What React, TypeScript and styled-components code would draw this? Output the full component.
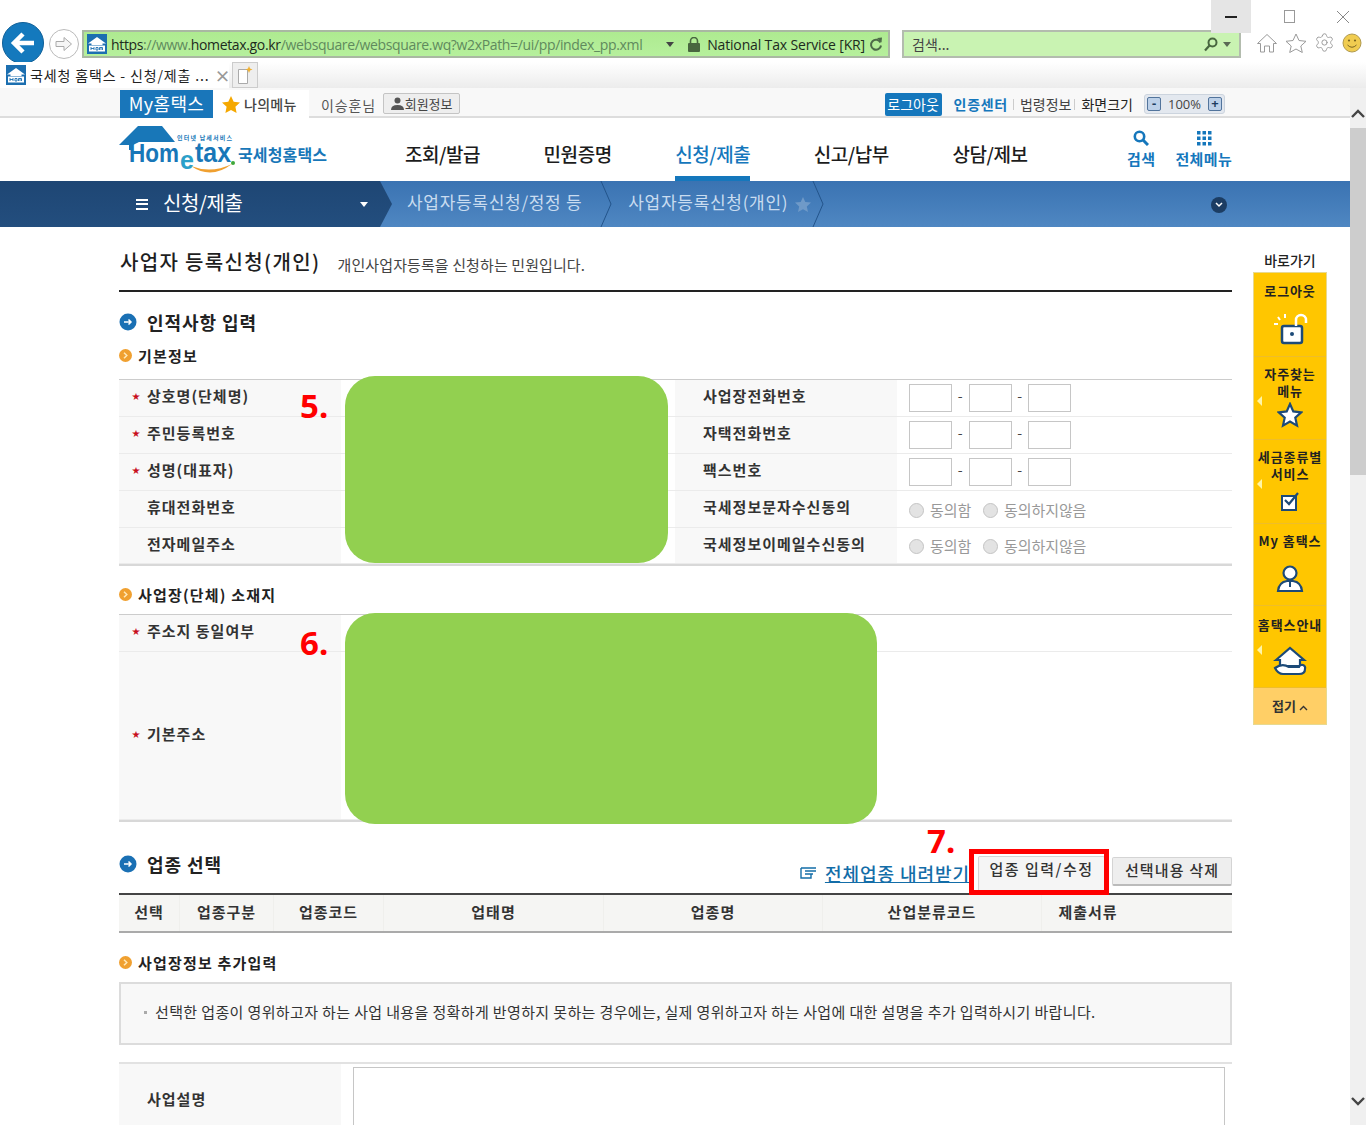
import React from 'react';
import styled, { createGlobalStyle } from 'styled-components';
import { Settings } from 'lucide-react';

const GlobalStyle = createGlobalStyle`
  html, body {
    margin: 0;
    padding: 0;
    background: #fff;
    font-family: "Noto Sans CJK KR", "Noto Sans", sans-serif;
    color: #222;
  }
  * { box-sizing: border-box; }
`;

const Screen = styled.div`
  position: relative;
  width: 1366px;
  height: 1125px;
  overflow: hidden;
  background: #fff;
`;

/* ---------- browser chrome ---------- */
const Chrome = styled.div`
  position: relative;
  height: 88px;
  background: #fff;
`;

const WindowControls = styled.div`
  position: absolute;
  top: 0;
  right: 9px;
  display: flex;
`;

const WindowButton = styled.div<{ $active?: boolean; $width: number }>`
  width: ${p => p.$width}px;
  height: 33px;
  display: flex;
  align-items: center;
  justify-content: center;
  background: ${p => (p.$active ? '#e5e5e5' : 'transparent')};
`;

const ToolRow = styled.div`
  display: flex;
  align-items: flex-start;
  padding: 22px 0 0 2px;
  height: 62px;
`;

const BackButton = styled.div`
  width: 42px;
  height: 42px;
  border-radius: 50%;
  background: #1479bd;
  border: 1px solid #0e5f98;
  display: flex;
  align-items: center;
  justify-content: center;
`;

const ForwardButton = styled.div`
  width: 30px;
  height: 30px;
  margin: 7px 3px 0 5px;
  border-radius: 50%;
  border: 1px solid #bbb;
  background: #fff;
  display: flex;
  align-items: center;
  justify-content: center;
`;

const AddressBar = styled.div`
  width: 808px;
  height: 28px;
  margin-top: 8px;
  padding: 0 5px 0 3px;
  background: linear-gradient(#aeea90, #b6f09c);
  border: 2px solid #a9b8a2;
  display: flex;
  align-items: center;
  font-family: "Open Sans", sans-serif;
  font-size: 14px;
  letter-spacing: -0.35px;
  white-space: nowrap;
`;

const UrlDark = styled.span`
  color: #1d2b1d;
`;

const UrlDim = styled.span`
  color: #5f8a5d;
`;

const UrlText = styled.div`
  width: 567px;
  margin-left: 4px;
`;

const Caret = styled.span<{ $color?: string }>`
  display: inline-block;
  width: 0;
  height: 0;
  border-left: 4px solid transparent;
  border-right: 4px solid transparent;
  border-top: 5px solid ${p => p.$color ?? '#444'};
`;

const CertName = styled.span`
  margin-left: 6px;
  color: #1d2b1d;
  letter-spacing: -0.15px;
`;

const BarIcon = styled.svg<{ $left: number }>`
  flex: none;
  margin-left: ${p => p.$left}px;
`;

const FaviconBox = styled.svg`
  flex: none;
`;

const SearchBar = styled.div`
  width: 339px;
  height: 28px;
  margin: 8px 0 0 12px;
  padding: 0 8px;
  background: #c9f3b2;
  border: 2px solid #b3bcae;
  display: flex;
  align-items: center;
  justify-content: space-between;
  font-size: 14px;
  color: #444;
`;

const SearchEnd = styled.div`
  display: flex;
  align-items: center;
  gap: 5px;
`;

const BrowserIcons = styled.div`
  display: flex;
  align-items: center;
  gap: 7px;
  margin: 10px 0 0 15px;
`;

const TabRow = styled.div`
  height: 26px;
  display: flex;
  align-items: stretch;
  background: linear-gradient(#fff, #ececec);
`;

const Tab = styled.div`
  width: 229px;
  padding-left: 6px;
  background: #fff;
  display: flex;
  align-items: center;
  gap: 4px;
  font-size: 14px;
  letter-spacing: 0.85px;
  color: #222;
  white-space: nowrap;
`;

const TabClose = styled.span`
  margin-left: 1px;
  color: #999;
  font-size: 16px;
  font-weight: 700;
`;

const NewTab = styled.div`
  width: 26px;
  margin-left: 3px;
  background: #eee;
  border: 1px solid #ccc;
  display: flex;
  align-items: center;
  justify-content: center;
`;

/* ---------- page frame ---------- */
const Viewport = styled.div`
  display: flex;
  height: 1037px;
`;

const Page = styled.div`
  width: 1350px;
  flex: none;
`;

const Scrollbar = styled.div`
  width: 16px;
  flex: none;
  padding-top: 21px;
  background: #f0f0f0;
  display: flex;
  flex-direction: column;
  align-items: center;
`;

const ScrollThumb = styled.div`
  width: 16px;
  height: 347px;
  margin-top: 10px;
  background: #cdcdcd;
`;

const ScrollDown = styled.div`
  margin-top: auto;
  margin-bottom: 14px;
`;

/* ---------- utility bar ---------- */
const UtilBar = styled.div`
  height: 30px;
  padding: 0 125px 0 120px;
  background: #f8f8f8;
  border-bottom: 2px solid #ddd;
  display: flex;
  align-items: flex-start;
`;

const MyTab = styled.div`
  width: 93px;
  height: 28px;
  margin-top: 2px;
  background: #1976ba;
  color: #fff;
  font-size: 18px;
  line-height: 26px;
  letter-spacing: 0.4px;
  text-align: center;
  white-space: nowrap;
`;

const MyMenu = styled.div`
  width: 96px;
  height: 28px;
  margin-top: 2px;
  padding-left: 9px;
  background: #fff;
  display: flex;
  align-items: center;
  gap: 4px;
  font-size: 14px;
  font-weight: 500;
  letter-spacing: 0.3px;
  color: #444;
`;

const UserName = styled.span`
  margin: 6px 0 0 12px;
  font-size: 14px;
  line-height: 22px;
  color: #555;
  letter-spacing: 0.9px;
`;

const MemberButton = styled.div`
  width: 77px;
  height: 21px;
  margin: 5px 0 0 7px;
  background: #eee;
  border: 1px solid #c4c4c4;
  border-radius: 2px;
  display: flex;
  align-items: center;
  justify-content: center;
  gap: 1px;
  font-size: 13px;
  color: #444;
`;

const UtilRight = styled.div`
  margin-left: auto;
  display: flex;
  align-items: center;
  height: 28px;
  margin-top: 2px;
  font-size: 14px;
  white-space: nowrap;
`;

const LogoutButton = styled.div`
  width: 57px;
  height: 23px;
  background: #1577bc;
  border-radius: 2px;
  color: #fff;
  text-align: center;
  line-height: 22px;
  font-size: 14px;
`;

const CertLink = styled.span`
  margin-left: 12px;
  color: #1577bc;
  font-weight: 700;
  letter-spacing: 0.7px;
`;

const UtilLink = styled.span<{ $dark?: boolean }>`
  margin-left: ${p => (p.$dark ? 3 : 5)}px;
  padding-left: 6px;
  border-left: 1px solid #ccc;
  line-height: 11px;
  color: ${p => (p.$dark ? '#222' : '#444')};
`;

const ZoomBox = styled.div`
  width: 81px;
  height: 20px;
  margin-left: 11px;
  padding: 0 2px;
  background: #e3e8ef;
  border: 1px solid #ccd4de;
  border-radius: 3px;
  display: flex;
  align-items: center;
  justify-content: space-between;
  font-family: "Open Sans", sans-serif;
  font-size: 13px;
  color: #444;
`;

const ZoomStep = styled.div`
  width: 14px;
  height: 14px;
  background: #bcd0e8;
  border: 1px solid #52749c;
  border-radius: 2px;
  line-height: 11px;
  text-align: center;
  color: #1d3c60;
  font-weight: 700;
`;

/* ---------- main navigation ---------- */
const NavBar = styled.div`
  height: 63px;
  padding-left: 119px;
  display: flex;
  align-items: flex-start;
`;

const LogoWrap = styled.div`
  width: 286px;
  height: 63px;
  flex: none;
`;

const NavItem = styled.div<{ $active?: boolean }>`
  height: 63px;
  margin-right: 63.5px;
  padding-top: 21px;
  font-size: 19px;
  line-height: 30px;
  font-weight: 500;
  letter-spacing: -0.45px;
  white-space: nowrap;
  color: ${p => (p.$active ? '#1577bc' : '#1c1c1c')};
  border-bottom: 5px solid ${p => (p.$active ? '#1577bc' : 'transparent')};
`;

const NavTools = styled.div`
  margin-left: 36px;
  display: flex;
  gap: 20px;
  padding-top: 12px;
`;

const NavTool = styled.div`
  display: flex;
  flex-direction: column;
  align-items: center;
  gap: 2px;
  color: #1577bc;
  font-size: 15px;
  line-height: 22px;
  font-weight: 700;
  letter-spacing: 0.4px;
  white-space: nowrap;
`;

/* ---------- breadcrumb bar ---------- */
const CrumbBar = styled.div`
  height: 46px;
  background: linear-gradient(#3a73b2, #4f87c2);
  display: flex;
  align-items: center;
  color: #c9dcf0;
`;

const CrumbHome = styled.div`
  width: 392px;
  height: 46px;
  flex: none;
  padding-left: 136px;
  background: linear-gradient(#1e4674, #234e7e);
  clip-path: polygon(0 0, 380px 0, 392px 50%, 380px 100%, 0 100%);
  display: flex;
  align-items: center;
  color: #fff;
  font-size: 20px;
  letter-spacing: -0.4px;
`;

const Burger = styled.span`
  width: 12px;
  height: 11px;
  margin-right: 15px;
  border-top: 2px solid #fff;
  border-bottom: 2px solid #fff;
  position: relative;
  &::after {
    content: '';
    position: absolute;
    left: 0;
    right: 0;
    top: 2.5px;
    height: 2px;
    background: #fff;
  }
`;

const CrumbHomeLabel = styled.span`
  width: 197px;
  padding-bottom: 4px;
`;

const Crumb = styled.div<{ $left: number }>`
  margin-left: ${p => p.$left}px;
  padding-bottom: 5px;
  font-size: 17px;
  letter-spacing: 0.7px;
  white-space: nowrap;
`;

const CrumbFold = styled.svg<{ $left: number }>`
  display: block;
  flex: none;
  margin: 0 4px 0 ${p => p.$left}px;
`;

const CrumbToggle = styled.div`
  width: 16px;
  height: 16px;
  margin: 1px 123px 0 auto;
  border-radius: 50%;
  background: #1c3d63;
  display: flex;
  align-items: center;
  justify-content: center;
`;

/* ---------- content ---------- */
const Body = styled.div`
  display: flex;
  padding-left: 119px;
`;

const Content = styled.main`
  width: 1113px;
  flex: none;
`;

const TitleRow = styled.div`
  height: 65px;
  padding-top: 21px;
  border-bottom: 2px solid #222;
  display: flex;
  align-items: flex-start;
  white-space: nowrap;
`;

const PageTitle = styled.h1`
  margin: 0 0 0 1px;
  font-size: 20px;
  line-height: 28px;
  font-weight: 500;
  letter-spacing: 1.35px;
  color: #1e1e1e;
`;

const PageDesc = styled.span`
  margin: 3px 0 0 17px;
  font-size: 15px;
  line-height: 28px;
  letter-spacing: 0.1px;
  color: #444;
`;

const SectionHead = styled.div`
  margin-top: 18px;
  display: flex;
  align-items: center;
  gap: 10px;
  height: 24px;
  font-size: 18px;
  font-weight: 700;
  letter-spacing: 0.95px;
  color: #222;
`;

const SubHead = styled.div<{ $top: number }>`
  margin-top: ${p => p.$top}px;
  height: 20px;
  padding-bottom: 2px;
  display: flex;
  align-items: center;
  gap: 6px;
  font-size: 15px;
  font-weight: 700;
  color: #222;
  letter-spacing: 1.2px;
  white-space: nowrap;
`;

const FormTable = styled.div<{ $top: number }>`
  position: relative;
  margin-top: ${p => p.$top}px;
  border-top: 1px solid #ccc;
  border-bottom: 2px solid #d8d8d8;
`;

const FormRow = styled.div<{ $height?: number }>`
  display: flex;
  height: ${p => p.$height ?? 37}px;
  border-bottom: 1px solid #ebebeb;
  &:last-of-type {
    border-bottom: 0;
  }
`;

const LabelCell = styled.div`
  width: 222px;
  flex: none;
  padding: 0 0 5px 13px;
  background: #f8f8f8;
  display: flex;
  align-items: center;
  font-size: 15px;
  font-weight: 700;
  letter-spacing: 1px;
  color: #333;
  white-space: nowrap;
`;

const Required = styled.span`
  width: 15px;
  flex: none;
  color: #c8101c;
  font-size: 8px;
  letter-spacing: 0;
`;

const ValueCell = styled.div<{ $wide?: boolean }>`
  width: 334px;
  flex: ${p => (p.$wide ? 1 : 'none')};
`;

const SideLabelCell = styled(LabelCell)`
  padding-left: 28px;
`;

const InputCell = styled.div`
  flex: 1;
  padding-left: 12px;
  display: flex;
  align-items: center;
`;

const PhoneInput = styled.input`
  width: 43px;
  height: 28px;
  padding: 0;
  background: #fff;
  border: 1px solid #c6c6c6;
`;

const Dash = styled.span`
  width: 16.5px;
  text-align: center;
  font-size: 14px;
  line-height: 20px;
  margin-top: -7px;
  color: #444;
`;

const Radio = styled.span`
  width: 15px;
  height: 15px;
  margin: 2px 6px 0 0;
  border-radius: 50%;
  background: #e3e3e3;
  border: 1px solid #c4c4c4;
`;

const RadioLabel = styled.span`
  margin-right: 12px;
  font-size: 15px;
  color: #999;
  letter-spacing: -0.1px;
  white-space: nowrap;
`;

/* annotations painted over the captured form */
const Blob = styled.div<{ $top: number; $width: number; $height: number }>`
  position: absolute;
  top: ${p => p.$top}px;
  left: 226px;
  width: ${p => p.$width}px;
  height: ${p => p.$height}px;
  background: #92d050;
  border-radius: 30px;
`;

const StepMark = styled.span<{ $top: number; $left: number }>`
  position: absolute;
  top: ${p => p.$top}px;
  left: ${p => p.$left}px;
  font-family: "Noto Sans", "Open Sans", sans-serif;
  font-size: 33px;
  line-height: 40px;
  font-weight: 700;
  color: #f00;
`;

const Highlight = styled.div`
  position: absolute;
  top: 27px;
  left: 850px;
  width: 140px;
  height: 46px;
  border: 5px solid #f00;
`;

const ToolbarRow = styled.div`
  position: relative;
  height: 71px;
  padding-top: 31px;
  display: flex;
  align-items: flex-start;
`;

const ToolbarHead = styled(SectionHead)`
  margin-top: -1px;
`;

const ToolbarActions = styled.div`
  margin: 3px 0 0 auto;
  display: flex;
  align-items: flex-start;
`;

const DownloadLink = styled.a`
  margin: 5px 8px 0 0;
  display: flex;
  align-items: center;
  gap: 8px;
  font-size: 18px;
  line-height: 24px;
  font-weight: 500;
  letter-spacing: 0.95px;
  color: #136da8;
  text-decoration: underline;
  white-space: nowrap;
`;

const DownloadIcon = styled.svg`
  flex: none;
`;

const ActionButton = styled.div<{ $plain?: boolean }>`
  height: ${p => (p.$plain ? 29 : 36)}px;
  width: ${p => (p.$plain ? 120 : 127)}px;
  margin-left: ${p => (p.$plain ? 7 : 0)}px;
  margin-top: ${p => (p.$plain ? 1 : 0)}px;
  background: ${p => (p.$plain ? '#eee' : '#f5f5f5')};
  border: 1px solid #d4d4d4;
  border-bottom: 2px solid #bbb;
  border-radius: 2px;
  text-align: center;
  font-size: 15px;
  line-height: 24px;
  font-weight: 500;
  letter-spacing: ${p => (p.$plain ? 1.15 : 1.5)}px;
  color: #333;
  white-space: nowrap;
`;

const GridHead = styled.div`
  height: 40px;
  display: flex;
  border-top: 2px solid #444;
  border-bottom: 2px solid #aaa;
  background: #f5f5f3;
`;

const GridCol = styled.div<{ $width: number }>`
  width: ${p => p.$width}px;
  flex: none;
  border-right: 1px solid #efefec;
  text-align: center;
  font-size: 15px;
  line-height: 33px;
  font-weight: 700;
  letter-spacing: 1px;
  color: #333;
  &:nth-last-child(-n + 2) {
    border-right: 0;
  }
`;

const Notice = styled.div`
  height: 63px;
  margin-top: 9px;
  padding: 0 0 5px 23px;
  background: #f8f8f8;
  border: 2px solid #dcdcdc;
  display: flex;
  align-items: center;
  gap: 8px;
  font-size: 15px;
  letter-spacing: 0.37px;
  color: #333;
  white-space: nowrap;
`;

const NoticeDot = styled.span`
  width: 3px;
  height: 3px;
  margin-top: 3px;
  flex: none;
  background: #aaa;
`;

const DescRow = styled.div`
  display: flex;
  height: 130px;
  margin-top: 17px;
  border-top: 2px solid #e2e2e2;
`;

const DescLabel = styled(LabelCell)`
  padding: 23px 0 0 28px;
  align-items: flex-start;
  line-height: 24px;
`;

const DescBox = styled.div`
  flex: 1;
  margin: 3px 7px 0 12px;
  border: 1px solid #c6c6c6;
  background: #fff;
`;

/* ---------- quick menu ---------- */
const QuickRail = styled.aside`
  width: 74px;
  margin: 23px 0 0 21px;
  flex: none;
`;

const QuickTitle = styled.div`
  height: 22px;
  text-align: center;
  font-size: 14px;
  line-height: 20px;
  font-weight: 500;
  color: #222;
`;

const QuickList = styled.div`
  border: 1px solid #e8d98f;
`;

const QuickItem = styled.div<{ $height: number; $top: number }>`
  position: relative;
  height: ${p => p.$height}px;
  padding-top: ${p => p.$top}px;
  background: #ffc600;
  border-bottom: 1px solid #eebd2a;
  display: flex;
  flex-direction: column;
  align-items: center;
  text-align: center;
  font-size: 13px;
  line-height: 17px;
  font-weight: 700;
  color: #222;
  letter-spacing: 0.9px;
  white-space: nowrap;
`;

const QuickIcon = styled.svg`
  margin-top: auto;
  margin-bottom: 11px;
`;

const NestedMark = styled.span`
  position: absolute;
  left: 3px;
  top: 39px;
  border-top: 5px solid transparent;
  border-bottom: 5px solid transparent;
  border-right: 5px solid #fff5a8;
`;

const QuickFold = styled.div`
  height: 36px;
  background: #ffcf66;
  text-align: center;
  font-size: 13px;
  line-height: 35px;
  font-weight: 700;
  color: #333;
`;

/* ---------- drawings ---------- */
const HouseFavicon = () => (
  <FaviconBox width="20" height="20" viewBox="0 0 20 20">
    <rect width="20" height="20" fill="#1c6fb0" />
    <path d="M1 9.500 10 3l9 6.500h-3.500V11h-11V9.500z" fill="#fff" />
    <rect x="2" y="11.500" width="16" height="6" fill="#fff" />
    <path d="M4 13v3M7 13v3M4 14.500h3M9 13.500h2v2.500H9zM12.500 16v-2.500h3V16M14 13.500V16" stroke="#1c6fb0" strokeWidth=".9" fill="none" />
  </FaviconBox>
);

const BlueBullet = () => (
  <svg width="18" height="18" viewBox="0 0 18 18">
    <circle cx="9" cy="9" r="8.500" fill="#1a70b4" />
    <path d="M5 9h7M9.500 6.500 12 9l-2.500 2.500" stroke="#fff" strokeWidth="1.500" fill="none" />
  </svg>
);

const OrangeBullet = () => (
  <svg width="13" height="13" viewBox="0 0 13 13">
    <circle cx="6.500" cy="6.500" r="6.500" fill="#f0a030" />
    <path d="M5 3.800 7.800 6.500 5 9.200" stroke="#ffe9b8" strokeWidth="1.500" fill="none" />
  </svg>
);

const Logo = () => (
  <LogoWrap>
    <svg width="210" height="60" viewBox="0 0 210 60">
      <path d="M0 27 19 8h24l13 16H20l-6 3v5h-4v-5z" fill="#1877b8" />
      <text x="10" y="44" fontFamily="Liberation Sans, sans-serif" fontSize="25" fontWeight="700" fill="#1877b8" textLength="50" lengthAdjust="spacingAndGlyphs">Hom</text>
      <text x="61" y="51" fontFamily="Liberation Sans, sans-serif" fontSize="25" fontWeight="700" fill="#2ba0c9">e</text>
      <text x="76" y="44" fontFamily="Liberation Sans, sans-serif" fontSize="27" fontWeight="700" fill="#1877b8" textLength="36" lengthAdjust="spacingAndGlyphs">tax</text>
      <circle cx="114" cy="45" r="2" fill="#3fa83a" />
      <path d="M72 48Q92 62 113 46 92 56 72 48" fill="#f0a030" />
      <text x="58" y="22" fontFamily="Noto Sans CJK KR, sans-serif" fontSize="6" fontWeight="700" fill="#1877b8" textLength="55">인터넷 납세서비스</text>
      <text x="119" y="43" fontFamily="Noto Sans CJK KR, sans-serif" fontSize="16" fontWeight="700" fill="#1877b8" textLength="89">국세청홈택스</text>
    </svg>
  </LogoWrap>
);

const Chevron = ({ up }: { up?: boolean }) => (
  <svg width="14" height="9" viewBox="0 0 14 9">
    <path d={up ? 'M1 8 7 2l6 6' : 'M1 1l6 6 6-6'} stroke="#444" strokeWidth="2.400" fill="none" />
  </svg>
);

const Fold = ({ left }: { left: number }) => (
  <CrumbFold $left={left} width="12" height="46" viewBox="0 0 12 46">
    <path d="M1 0 11 23 1 46" stroke="#23548a" fill="none" />
  </CrumbFold>
);

const PhoneFields = () => (
  <InputCell>
    <PhoneInput />
    <Dash>-</Dash>
    <PhoneInput />
    <Dash>-</Dash>
    <PhoneInput />
  </InputCell>
);

const AgreeFields = () => (
  <InputCell>
    <Radio />
    <RadioLabel>동의함</RadioLabel>
    <Radio />
    <RadioLabel>동의하지않음</RadioLabel>
  </InputCell>
);

const gridCols: [string, number][] = [
  ['선택', 61],
  ['업종구분', 94],
  ['업종코드', 110],
  ['업태명', 220],
  ['업종명', 219],
  ['산업분류코드', 219],
  ['제출서류', 92],
  ['', 98],
];

export default function App() {
  return (
    <Screen>
      <GlobalStyle />
      <Chrome>
        <WindowControls>
          <WindowButton $active $width={40}>
            <svg width="12" height="2"><rect width="12" height="2" fill="#222" /></svg>
          </WindowButton>
          <WindowButton $width={78}>
            <svg width="12" height="13"><rect x=".5" y=".5" width="10" height="12" fill="none" stroke="#999" /></svg>
          </WindowButton>
          <WindowButton $width={28}>
            <svg width="14" height="14"><path d="M1 1l12 12M13 1 1 13" stroke="#888" fill="none" /></svg>
          </WindowButton>
        </WindowControls>
        <ToolRow>
          <BackButton>
            <svg width="26" height="24" viewBox="0 0 26 24">
              <path d="M24 12H5M13 3l-9 9 9 9" stroke="#fff" strokeWidth="4.500" fill="none" />
            </svg>
          </BackButton>
          <ForwardButton>
            <svg width="18" height="16" viewBox="0 0 18 16">
              <path d="M1 5.500h8V1.500l7.500 6.500L9 14.500v-4H1z" stroke="#aaa" fill="#f6f6f6" />
            </svg>
          </ForwardButton>
          <AddressBar>
            <HouseFavicon />
            <UrlText>
              <UrlDark>https</UrlDark>
              <UrlDim>://www.</UrlDim>
              <UrlDark>hometax.go.kr</UrlDark>
              <UrlDim>/websquare/websquare.wq?w2xPath=/ui/pp/index_pp.xml</UrlDim>
            </UrlText>
            <Caret />
            <BarIcon $left={13} width="14" height="15" viewBox="0 0 14 15">
              <rect x="1" y="6" width="12" height="9" rx="1" fill="#48663f" />
              <path d="M3.500 6V4a3.500 3.500 0 0 1 7 0v2" stroke="#48663f" strokeWidth="1.600" fill="none" />
            </BarIcon>
            <CertName>National Tax Service [KR]</CertName>
            <BarIcon $left={4} width="14" height="15" viewBox="0 0 14 15">
              <path d="M11.500 5.500a5 5 0 1 0 .5 3" stroke="#4d6a48" strokeWidth="2" fill="none" />
              <path d="M8 1l5-.5-.5 5z" fill="#4d6a48" />
            </BarIcon>
          </AddressBar>
          <SearchBar>
            <span>검색...</span>
            <SearchEnd>
              <svg width="14" height="15" viewBox="0 0 14 15">
                <circle cx="8.500" cy="5.500" r="4" stroke="#48663f" strokeWidth="2" fill="none" />
                <path d="M5.500 8.500 1 13.500" stroke="#48663f" strokeWidth="2.200" />
              </svg>
              <Caret $color="#5a6a55" />
            </SearchEnd>
          </SearchBar>
          <BrowserIcons>
            <svg width="22" height="20" viewBox="0 0 22 20">
              <path d="M1.500 10.500 11 1.500l9.500 9h-3V19h-4v-6h-5v6h-4v-8.500z" stroke="#9a9a9a" fill="none" />
            </svg>
            <svg width="22" height="20" viewBox="0 0 22 20">
              <path d="m11 1 3 6.500 7 .8-5.200 4.700 1.500 6.500-6.300-3.500-6.300 3.500 1.500-6.500L1 8.300l7-.8z" stroke="#9a9a9a" fill="none" />
            </svg>
            <Settings size={21} strokeWidth={1.1} color="#9a9a9a" />
            <svg width="20" height="20" viewBox="0 0 20 20">
              <circle cx="10" cy="10" r="9" fill="#f0cc50" stroke="#b09a50" />
              <circle cx="7" cy="7.500" r="1.100" fill="#7a6520" />
              <circle cx="13" cy="7.500" r="1.100" fill="#7a6520" />
              <path d="M5.500 12q4.500 4.500 9 0" stroke="#7a6520" fill="none" />
            </svg>
          </BrowserIcons>
        </ToolRow>
        <TabRow>
          <Tab>
            <HouseFavicon />
            <span>국세청 홈택스 - 신청/제출 ...</span>
            <TabClose>×</TabClose>
          </Tab>
          <NewTab>
            <svg width="18" height="20" viewBox="0 0 18 20">
              <path d="M2.500 4.500h9v14h-9z" fill="#fff" stroke="#aaa" />
              <path d="m13 1 1 2.500 2.500 1-2.500 1L13 8l-1-2.500-2.500-1 2.500-1z" fill="#f0b030" />
            </svg>
          </NewTab>
        </TabRow>
      </Chrome>

      <Viewport>
        <Page>
          <UtilBar>
            <MyTab>My홈택스</MyTab>
            <MyMenu>
              <svg width="18" height="17" viewBox="0 0 18 17">
                <path d="m9 0 2.700 5.700 6.300.8-4.600 4.300 1.200 6.200L9 14l-5.600 3 1.200-6.200L0 6.500l6.300-.8z" fill="#f5a800" />
              </svg>
              <span>나의메뉴</span>
            </MyMenu>
            <UserName>이승훈님</UserName>
            <MemberButton>
              <svg width="13" height="13" viewBox="0 0 13 13">
                <circle cx="6.500" cy="3.500" r="3" fill="#555" />
                <path d="M0 13q0-5 6.500-5T13 13z" fill="#555" />
              </svg>
              <span>회원정보</span>
            </MemberButton>
            <UtilRight>
              <LogoutButton>로그아웃</LogoutButton>
              <CertLink>인증센터</CertLink>
              <UtilLink>법령정보</UtilLink>
              <UtilLink $dark>화면크기</UtilLink>
              <ZoomBox>
                <ZoomStep>-</ZoomStep>
                <span>100%</span>
                <ZoomStep>+</ZoomStep>
              </ZoomBox>
            </UtilRight>
          </UtilBar>

          <NavBar>
            <Logo />
            <NavItem>조회/발급</NavItem>
            <NavItem>민원증명</NavItem>
            <NavItem $active>신청/제출</NavItem>
            <NavItem>신고/납부</NavItem>
            <NavItem>상담/제보</NavItem>
            <NavTools>
              <NavTool>
                <svg width="16" height="16" viewBox="0 0 16 16">
                  <circle cx="6.500" cy="6.500" r="4.700" stroke="#1577bc" strokeWidth="2.600" fill="none" />
                  <path d="m10 10 5 5" stroke="#1577bc" strokeWidth="3" />
                </svg>
                <span>검색</span>
              </NavTool>
              <NavTool>
                <svg width="16" height="16" viewBox="0 0 16 16" fill="#1577bc">
                  {[1, 6.5, 12].map(y =>
                    [1, 6.5, 12].map(x => <rect key={`${x}-${y}`} x={x} y={y} width="3.500" height="3.500" />),
                  )}
                </svg>
                <span>전체메뉴</span>
              </NavTool>
            </NavTools>
          </NavBar>

          <CrumbBar>
            <CrumbHome>
              <Burger />
              <CrumbHomeLabel>신청/제출</CrumbHomeLabel>
              <Caret $color="#fff" />
            </CrumbHome>
            <Crumb $left={15}>사업자등록신청/정정 등</Crumb>
            <Fold left={18} />
            <Crumb $left={12}>사업자등록신청(개인)</Crumb>
            <BarIcon $left={7} width="16" height="15" viewBox="0 0 16 15">
              <path d="m8 0 2.300 5 5.700.6-4.200 3.800 1.200 5.600L8 12.200 3 15l1.200-5.600L0 5.600 5.700 5z" fill="#6f9ac8" />
            </BarIcon>
            <Fold left={1} />
            <CrumbToggle>
              <svg width="8" height="6" viewBox="0 0 8 6">
                <path d="m1 1 3 3 3-3" stroke="#fff" strokeWidth="1.500" fill="none" />
              </svg>
            </CrumbToggle>
          </CrumbBar>

          <Body>
            <Content>
              <TitleRow>
                <PageTitle>사업자 등록신청(개인)</PageTitle>
                <PageDesc>개인사업자등록을 신청하는 민원입니다.</PageDesc>
              </TitleRow>

              <SectionHead>
                <BlueBullet />
                인적사항 입력
              </SectionHead>
              <SubHead $top={12}>
                <OrangeBullet />
                기본정보
              </SubHead>

              <FormTable $top={13}>
                <FormRow>
                  <LabelCell><Required>★</Required>상호명(단체명)</LabelCell>
                  <ValueCell />
                  <SideLabelCell>사업장전화번호</SideLabelCell>
                  <PhoneFields />
                </FormRow>
                <FormRow>
                  <LabelCell><Required>★</Required>주민등록번호</LabelCell>
                  <ValueCell />
                  <SideLabelCell>자택전화번호</SideLabelCell>
                  <PhoneFields />
                </FormRow>
                <FormRow>
                  <LabelCell><Required>★</Required>성명(대표자)</LabelCell>
                  <ValueCell />
                  <SideLabelCell>팩스번호</SideLabelCell>
                  <PhoneFields />
                </FormRow>
                <FormRow>
                  <LabelCell><Required />휴대전화번호</LabelCell>
                  <ValueCell />
                  <SideLabelCell>국세정보문자수신동의</SideLabelCell>
                  <AgreeFields />
                </FormRow>
                <FormRow $height={36}>
                  <LabelCell><Required />전자메일주소</LabelCell>
                  <ValueCell />
                  <SideLabelCell>국세정보이메일수신동의</SideLabelCell>
                  <AgreeFields />
                </FormRow>
                <Blob $top={-4} $width={323} $height={187} />
                <StepMark $top={6} $left={181}>5.</StepMark>
              </FormTable>

              <SubHead $top={19}>
                <OrangeBullet />
                사업장(단체) 소재지
              </SubHead>

              <FormTable $top={9}>
                <FormRow>
                  <LabelCell><Required>★</Required>주소지 동일여부</LabelCell>
                  <ValueCell $wide />
                </FormRow>
                <FormRow $height={168}>
                  <LabelCell><Required>★</Required>기본주소</LabelCell>
                  <ValueCell $wide />
                </FormRow>
                <Blob $top={-2} $width={532} $height={211} />
                <StepMark $top={8} $left={181}>6.</StepMark>
              </FormTable>

              <ToolbarRow>
                <ToolbarHead>
                  <BlueBullet />
                  업종 선택
                </ToolbarHead>
                <ToolbarActions>
                  <DownloadLink>
                    <DownloadIcon width="17" height="12" viewBox="0 0 17 12">
                      <path d="M1 1h15M5 4h11M5 7h8M1 1v10h10V7" stroke="#136da8" strokeWidth="1.400" fill="none" />
                    </DownloadIcon>
                    전체업종 내려받기
                  </DownloadLink>
                  <ActionButton>업종 입력/수정</ActionButton>
                  <ActionButton $plain>선택내용 삭제</ActionButton>
                </ToolbarActions>
                <Highlight />
                <StepMark $top={-1} $left={808}>7.</StepMark>
              </ToolbarRow>

              <GridHead>
                {gridCols.map(([label, width]) => (
                  <GridCol key={width + label} $width={width}>{label}</GridCol>
                ))}
              </GridHead>

              <SubHead $top={20}>
                <OrangeBullet />
                사업장정보 추가입력
              </SubHead>

              <Notice>
                <NoticeDot />
                선택한 업종이 영위하고자 하는 사업 내용을 정확하게 반영하지 못하는 경우에는, 실제 영위하고자 하는 사업에 대한 설명을 추가 입력하시기 바랍니다.
              </Notice>

              <DescRow>
                <DescLabel>사업설명</DescLabel>
                <DescBox />
              </DescRow>
            </Content>

            <QuickRail>
              <QuickTitle>바로가기</QuickTitle>
              <QuickList>
                <QuickItem $height={84} $top={9}>
                  로그아웃
                  <QuickIcon width="38" height="32" viewBox="0 0 38 32">
                    <rect x="11" y="13" width="20" height="17" rx="2" fill="#fff" stroke="#1c4a78" strokeWidth="2.500" />
                    <path d="M25 13V7a5 5 0 0 1 10 0v3" stroke="#fff" strokeWidth="2.500" fill="none" />
                    <circle cx="21" cy="21" r="2" fill="#1c4a78" />
                    <path d="M3 11h4M7 4l2 3M14 1v4" stroke="#fff" strokeWidth="2" />
                  </QuickIcon>
                </QuickItem>
                <QuickItem $height={83} $top={8}>
                  자주찾는<br />메뉴
                  <NestedMark />
                  <QuickIcon width="26" height="26" viewBox="0 0 26 26">
                    <path d="m13 2 3.300 7.400 8 .9-6 5.400 1.700 7.900-7-4-7 4 1.700-7.900-6-5.400 8-.9z" fill="#fff" stroke="#1c4a78" strokeWidth="2.200" />
                  </QuickIcon>
                </QuickItem>
                <QuickItem $height={84} $top={8}>
                  세금종류별<br />서비스
                  <NestedMark />
                  <QuickIcon width="20" height="20" viewBox="0 0 20 20">
                    <rect x="2" y="4" width="14" height="14" fill="#fff" stroke="#1c4a78" strokeWidth="2" />
                    <path d="m5 8 4 4 9-11" stroke="#1c4a78" strokeWidth="2.200" fill="none" />
                  </QuickIcon>
                </QuickItem>
                <QuickItem $height={82} $top={8}>
                  My 홈택스
                  <QuickIcon width="30" height="30" viewBox="0 0 30 30">
                    <circle cx="15" cy="9" r="6.500" fill="#fff" stroke="#1c4a78" strokeWidth="2.200" />
                    <path d="M3 27q1-9 9-10h6q8 1 9 10z" fill="#fff" stroke="#1c4a78" strokeWidth="2.200" />
                    <path d="M15 17v6" stroke="#1c4a78" strokeWidth="2" />
                  </QuickIcon>
                </QuickItem>
                <QuickItem $height={82} $top={10}>
                  홈택스안내
                  <NestedMark />
                  <QuickIcon width="34" height="30" viewBox="0 0 34 30">
                    <path d="M3 14 17 2l14 12h-4v6H7v-6z" fill="#fff" stroke="#1c4a78" strokeWidth="2.200" />
                    <path d="M2 22q7-5 14-1h10a3 3 0 0 1 6 2q0 5-6 5H10q-5 0-8-6z" fill="#fff" stroke="#1c4a78" strokeWidth="2.200" />
                  </QuickIcon>
                </QuickItem>
                <QuickFold>
                  접기 <svg width="9" height="6" viewBox="0 0 9 6"><path d="m1 5 3.500-3.500L8 5" stroke="#333" strokeWidth="1.400" fill="none" /></svg>
                </QuickFold>
              </QuickList>
            </QuickRail>
          </Body>
        </Page>
        <Scrollbar>
          <Chevron up />
          <ScrollThumb />
          <ScrollDown><Chevron /></ScrollDown>
        </Scrollbar>
      </Viewport>
    </Screen>
  );
}
